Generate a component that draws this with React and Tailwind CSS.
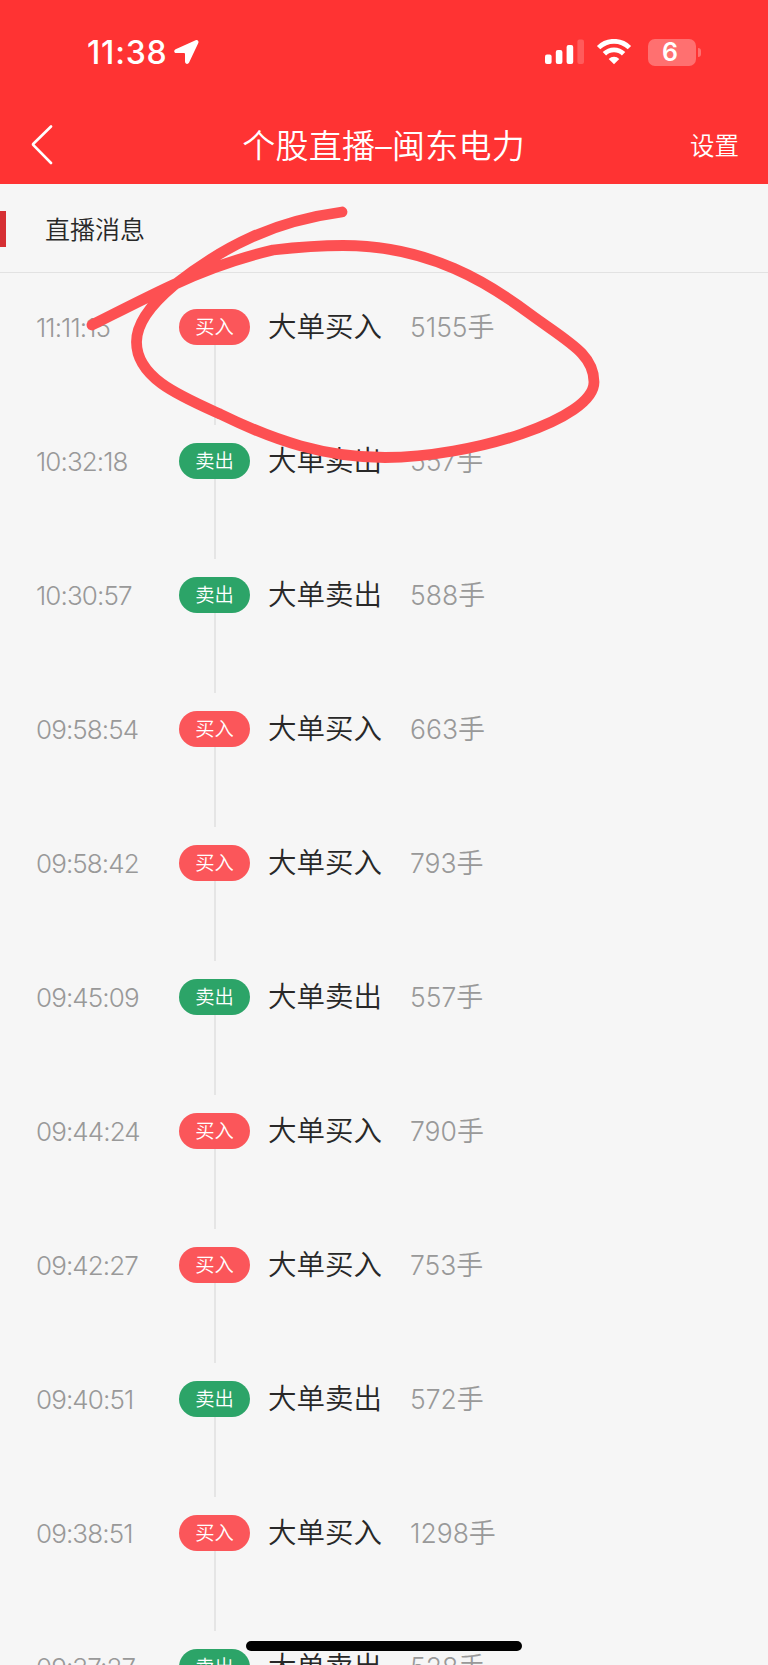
const MESSAGES = [
  { time: '11:11:15', side: 'buy', volume: 5155 },
  { time: '10:32:18', side: 'sell', volume: 557 },
  { time: '10:30:57', side: 'sell', volume: 588 },
  { time: '09:58:54', side: 'buy', volume: 663 },
  { time: '09:58:42', side: 'buy', volume: 793 },
  { time: '09:45:09', side: 'sell', volume: 557 },
  { time: '09:44:24', side: 'buy', volume: 790 },
  { time: '09:42:27', side: 'buy', volume: 753 },
  { time: '09:40:51', side: 'sell', volume: 572 },
  { time: '09:38:51', side: 'buy', volume: 1298 },
  { time: '09:37:27', side: 'sell', volume: 528 },
]

const SIDES = {
  buy: { label: '买入', pill: 'bg-[#fb565a]' },
  sell: { label: '卖出', pill: 'bg-[#2ca468]' },
}

// ── StatusBar ──────────────────────────────────────────────
function StatusBar() {
  return (
    <div className="flex h-[106px] items-start justify-between pl-[87px] pr-[67px] pt-[34px] text-white">
      <div className="flex h-9 items-center">
        <span className="w-[80px] whitespace-nowrap pt-[2px] text-[32px] font-medium leading-none tracking-[0.8px]">11:38</span>
        <svg width="26" height="26" viewBox="0 0 26 26" className="ml-[6px]" fill="currentColor">
          <path d="M22.6 1.3 2.6 10.2C.4 11.4 1 14 3.2 14h7.6c.8 0 1.2.4 1.2 1.2v7.3c0 2.7 3 3.3 4.1 1.1L25.3 3.9c.8-1.7-.9-3.4-2.7-2.6Z" />
        </svg>
      </div>
      <div className="flex h-9 items-center">
        <svg width="39" height="26" viewBox="0 0 39 26" fill="currentColor">
          <rect x="0" y="15.5" width="6.6" height="9.5" rx="2" />
          <rect x="10.8" y="11" width="6.6" height="14" rx="2" />
          <rect x="21.6" y="6" width="6.6" height="19" rx="2" />
          <rect x="32.4" y="0.5" width="6.6" height="24.5" rx="2" opacity="0.2" />
        </svg>
        <svg width="36" height="26" viewBox="0 0 36 26" className="ml-[12px]" fill="none" stroke="currentColor" strokeWidth="4.8">
          <path d="M2.6 8.6a22 22 0 0 1 30.8 0" />
          <path d="M8.4 14.8a13.6 13.6 0 0 1 19.2 0" />
          <path d="M18 25.2 12.7 20a7.6 7.6 0 0 1 10.6 0Z" fill="currentColor" stroke="none" />
        </svg>
        <div className="ml-[16px] flex h-[27px] w-[48px] items-center justify-center rounded-[7px] bg-white/30">
          <span className="pr-1 text-[25px] font-semibold leading-none">6</span>
        </div>
        <div className="ml-[2px] h-[9px] w-[3px] rounded-r-full bg-white/30" />
      </div>
    </div>
  )
}

// ── MessageRow ─────────────────────────────────────────────
function MessageRow({ message }) {
  const side = SIDES[message.side]
  return (
    <li className="flex h-[134px] shrink-0 pl-[36px]">
      <time className="h-9 w-[143px] text-[26px] leading-[37px] tracking-[-0.9px] text-[#999]">{message.time}</time>
      <div className="flex w-[71px] flex-col items-center">
        <span className={`flex h-9 w-full items-center justify-center rounded-full pt-px text-[19.3px] text-white ${side.pill}`}>
          {side.label}
        </span>
        <span className="ml-px h-[80px] w-[2px] bg-[#e5e5e5]" />
      </div>
      <span className="ml-[18px] h-9 w-[142px] whitespace-nowrap text-[28.5px] leading-9 text-[#282828]">大单{side.label}</span>
      <span className="h-9 text-[27px] leading-9 text-[#999]">
        <span className="text-[26.5px]">{message.volume}</span>手
      </span>
    </li>
  )
}

export default function App() {
  return (
    <div className="relative flex h-[1665px] w-[768px] flex-col overflow-hidden bg-[#f6f6f6] font-['Inter','Noto_Sans_CJK_SC',sans-serif] font-[350]">
      {/* Header */}
      <header className="h-[184px] shrink-0 bg-[#ff3333]">
        <StatusBar />
        <nav className="flex h-[78px] items-center justify-between pl-[31px] pr-[29px] text-white">
          <svg width="50" height="42" viewBox="0 0 50 42" fill="none" stroke="currentColor" strokeWidth="2.6" strokeLinecap="round" strokeLinejoin="round">
            <path d="M20 2.5 2.4 19.8a1 1 0 0 0 0 1.4L20 39" />
          </svg>
          <h1 className="whitespace-nowrap pr-[4px] pt-[3px] text-[33px] tracking-[0.25px] font-[350]">个股直播–闽东电力</h1>
          <button className="pt-[2px] text-[24.5px]">设置</button>
        </nav>
      </header>

      {/* Section title */}
      <div className="flex h-[89px] shrink-0 items-center border-b border-[#e2e2e2] pt-[2px]">
        <span className="h-9 w-[6px] bg-[#d62f33]" />
        <h2 className="ml-[39px] pt-[3px] text-[25px] font-[350] text-[#282828]">直播消息</h2>
      </div>

      {/* Timeline */}
      <ul className="flex flex-col pt-9">
        {MESSAGES.map((m) => (
          <MessageRow key={m.time} message={m} />
        ))}
      </ul>

      {/* Marker stroke */}
      <svg className="pointer-events-none absolute left-0 top-0" width="768" height="500" fill="none">
        <path
          d="M342 212C275 221 225 245 173 286C148 307 136.5 325 136.5 342C136.5 378 180 396 220 414C275 441 325 457.5 385 457.5C470 457.5 594 420 594 382C594 354 568 342 530 314C490 284 430 245.5 343 245.5C318 245.5 295 247.5 273 250C235 259 205 270 173 285C145 298 118 312 92 325"
          stroke="#fd5052"
          strokeWidth="10.8"
          strokeLinecap="round"
          strokeLinejoin="round"
        />
      </svg>

      {/* Home indicator */}
      <div className="absolute bottom-[14px] left-[246px] h-[10px] w-[276px] rounded-full bg-black" />
    </div>
  )
}
